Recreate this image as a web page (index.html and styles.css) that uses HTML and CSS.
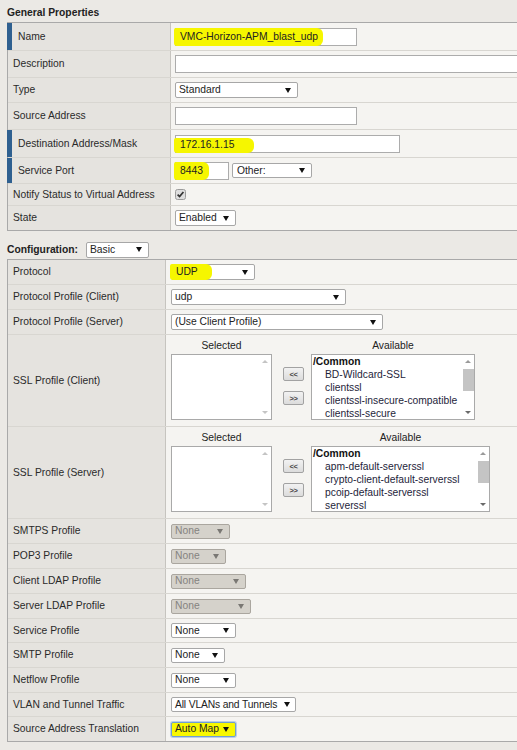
FILE: index.html
```html
<!DOCTYPE html>
<html>
<head>
<meta charset="utf-8">
<title>Virtual Server Properties</title>
<link rel="stylesheet" href="styles.css">
</head>
<body>
<div class="page">
  <div class="heading">General Properties</div>
  <div class="table general">
    <div class="row r28 req">
      <div class="lbl">Name</div>
      <div class="val"><span class="input w-name"><span class="hl hl-name">VMC-Horizon-APM_blast_udp</span></span></div>
    </div>
    <div class="row r27">
      <div class="lbl">Description</div>
      <div class="val"><span class="input w-desc"></span></div>
    </div>
    <div class="row r25">
      <div class="lbl">Type</div>
      <div class="val"><span class="select w-type"><span>Standard</span><i class="arr"></i></span></div>
    </div>
    <div class="row r27">
      <div class="lbl">Source Address</div>
      <div class="val"><span class="input w-src"></span></div>
    </div>
    <div class="row r28 req">
      <div class="lbl">Destination Address/Mask</div>
      <div class="val"><span class="input w-dst"><span class="hl hl-dst">172.16.1.15</span></span></div>
    </div>
    <div class="row r26 req">
      <div class="lbl">Service Port</div>
      <div class="val gap3"><span class="input w-port"><span class="hl hl-port">8443</span></span><span class="select w-other"><span>Other:</span><i class="arr"></i></span></div>
    </div>
    <div class="row r22">
      <div class="lbl">Notify Status to Virtual Address</div>
      <div class="val"><svg class="check" width="11" height="11" viewBox="0 0 11 11"><rect x="0.5" y="0.5" width="10" height="10" rx="2" fill="#dedede" stroke="#9c9c9c"/><path d="M2.6 5.6 L4.6 7.6 L8.4 3" fill="none" stroke="#333" stroke-width="1.7"/></svg></div>
    </div>
    <div class="row r24">
      <div class="lbl">State</div>
      <div class="val"><span class="select w-state"><span>Enabled</span><i class="arr"></i></span></div>
    </div>
  </div>

  <div class="config-head">
    <span class="heading-text">Configuration:</span>
    <span class="select w-basic"><span>Basic</span><i class="arr"></i></span>
  </div>

  <div class="table config">
    <div class="row r25">
      <div class="lbl">Protocol</div>
      <div class="val"><span class="select w-proto"><span class="hl hl-proto">UDP</span><i class="arr"></i></span></div>
    </div>
    <div class="row r25">
      <div class="lbl">Protocol Profile (Client)</div>
      <div class="val"><span class="select w-udp"><span>udp</span><i class="arr"></i></span></div>
    </div>
    <div class="row r25">
      <div class="lbl">Protocol Profile (Server)</div>
      <div class="val"><span class="select w-ucp"><span>(Use Client Profile)</span><i class="arr"></i></span></div>
    </div>
    <div class="row r92">
      <div class="lbl">SSL Profile (Client)</div>
      <div class="val dual">
        <div class="col">
          <div class="cap">Selected</div>
          <div class="listbox lb-sel">
            <div class="items"></div>
            <div class="sbar light"><span class="sarr up"></span><span class="sfill"></span><span class="sarr down"></span></div>
          </div>
        </div>
        <div class="btns"><span class="btn">&lt;&lt;</span><span class="btn">&gt;&gt;</span></div>
        <div class="col">
          <div class="cap">Available</div>
          <div class="listbox lb-av-c">
            <div class="items">
              <div class="grp">/Common</div>
              <div class="it">BD-Wildcard-SSL</div>
              <div class="it">clientssl</div>
              <div class="it">clientssl-insecure-compatible</div>
              <div class="it">clientssl-secure</div>
            </div>
            <div class="sbar"><span class="sarr up"></span><span class="thumb"></span><span class="sfill"></span><span class="sarr down"></span></div>
          </div>
        </div>
      </div>
    </div>
    <div class="row r92">
      <div class="lbl">SSL Profile (Server)</div>
      <div class="val dual">
        <div class="col">
          <div class="cap">Selected</div>
          <div class="listbox lb-sel">
            <div class="items"></div>
            <div class="sbar light"><span class="sarr up"></span><span class="sfill"></span><span class="sarr down"></span></div>
          </div>
        </div>
        <div class="btns"><span class="btn">&lt;&lt;</span><span class="btn">&gt;&gt;</span></div>
        <div class="col">
          <div class="cap">Available</div>
          <div class="listbox lb-av-s">
            <div class="items">
              <div class="grp">/Common</div>
              <div class="it">apm-default-serverssl</div>
              <div class="it">crypto-client-default-serverssl</div>
              <div class="it">pcoip-default-serverssl</div>
              <div class="it">serverssl</div>
            </div>
            <div class="sbar"><span class="sarr up"></span><span class="thumb"></span><span class="sfill"></span><span class="sarr down"></span></div>
          </div>
        </div>
      </div>
    </div>
    <div class="row r25">
      <div class="lbl">SMTPS Profile</div>
      <div class="val"><span class="select dis w-smtps"><span>None</span><i class="arr"></i></span></div>
    </div>
    <div class="row r25">
      <div class="lbl">POP3 Profile</div>
      <div class="val"><span class="select dis w-pop3"><span>None</span><i class="arr"></i></span></div>
    </div>
    <div class="row r25">
      <div class="lbl">Client LDAP Profile</div>
      <div class="val"><span class="select dis w-cldap"><span>None</span><i class="arr"></i></span></div>
    </div>
    <div class="row r25">
      <div class="lbl">Server LDAP Profile</div>
      <div class="val"><span class="select dis w-sldap"><span>None</span><i class="arr"></i></span></div>
    </div>
    <div class="row r24">
      <div class="lbl">Service Profile</div>
      <div class="val"><span class="select w-svc"><span>None</span><i class="arr"></i></span></div>
    </div>
    <div class="row r25">
      <div class="lbl">SMTP Profile</div>
      <div class="val"><span class="select w-smtp"><span>None</span><i class="arr"></i></span></div>
    </div>
    <div class="row r25">
      <div class="lbl">Netflow Profile</div>
      <div class="val"><span class="select w-net"><span>None</span><i class="arr"></i></span></div>
    </div>
    <div class="row r24">
      <div class="lbl">VLAN and Tunnel Traffic</div>
      <div class="val"><span class="select w-vlan"><span class="tight">All VLANs and Tunnels</span><i class="arr"></i></span></div>
    </div>
    <div class="row r24">
      <div class="lbl">Source Address Translation</div>
      <div class="val"><span class="select w-snat hl-sel"><span>Auto Map</span><i class="arr"></i></span></div>
    </div>
  </div>
</div>
</body>
</html>
```

FILE: styles.css
```css
html, body {
  margin: 0;
  padding: 0;
  overflow: hidden;
}
body {
  width: 517px;
  height: 750px;
  background: #ebe9e5;
  font-family: "Liberation Sans", Arial, sans-serif;
  font-size: 10.3px;
  color: #222;
}
.page {
  padding-left: 7px;
  width: 510px;
  overflow: hidden;
}
.heading {
  box-sizing: border-box;
  height: 22px;
  padding-top: 6px;
  line-height: 14px;
  font-weight: bold;
  color: #222;
}
.heading-text {
  font-weight: bold;
  line-height: 14px;
}
.config-head {
  box-sizing: border-box;
  height: 28px;
  padding-top: 9px;
  display: flex;
  align-items: center;
  gap: 8px;
}
.table {
  width: 540px;
  border: 1px solid #a9a9a9;
  background: #f5f4f1;
}
.row {
  display: grid;
  box-sizing: border-box;
  border-bottom: 1px solid #d8d6d1;
}
.row:last-child { border-bottom: 0; }
.general .row { grid-template-columns: 163px 1fr; }
.config .row { grid-template-columns: 158px 1fr; }
.r22 { height: 22px; }
.r24 { height: 24px; }
.r25 { height: 25px; }
.r26 { height: 26px; }
.r27 { height: 27px; }
.r28 { height: 28px; }
.r92 { height: 92px; }

.lbl {
  box-sizing: border-box;
  display: flex;
  align-items: center;
  padding-left: 5px;
  background: #e5e3df;
  border-right: 1px solid #c6c4bf;
  color: #2a2a2a;
  white-space: nowrap;
  line-height: 14px;
}
.req .lbl {
  margin-left: -1px;
  border-left: 5px solid #2f6090;
  padding-left: 6px;
}
.val {
  display: flex;
  align-items: center;
  padding-left: 4px;
  overflow: hidden;
}
.config .val { padding-left: 5px; }
.gap3 { gap: 3px; }

.input {
  box-sizing: border-box;
  display: inline-flex;
  align-items: center;
  flex-shrink: 0;
  height: 18px;
  padding: 0 4px;
  border: 1px solid #acacac;
  background: #fff;
  white-space: nowrap;
  line-height: 14px;
}
.select {
  box-sizing: border-box;
  display: inline-flex;
  align-items: center;
  justify-content: space-between;
  flex-shrink: 0;
  height: 16px;
  padding: 0 6px 0 3px;
  border: 1px solid #a7a7a7;
  border-radius: 2px;
  background: #fff;
  white-space: nowrap;
  line-height: 14px;
}
.arr {
  display: block;
  flex-shrink: 0;
  width: 0;
  height: 0;
  border-left: 3px solid transparent;
  border-right: 3px solid transparent;
  border-top: 5px solid #111;
}
.tight { letter-spacing: -0.15px; }
.select.dis {
  background: #d5d2cb;
  border-color: #aaa69f;
  color: #858380;
}
.select.dis .arr { border-top-color: #7a7874; }

.w-name { width: 182px; }
.w-desc { width: 420px; }
.w-type { width: 123px; }
.w-src { width: 182px; }
.w-dst { width: 225px; }
.w-port { width: 54px; }
.w-other { width: 80px; height: 15px; padding-left: 4px; }
.w-state { width: 61px; }
.w-basic { width: 63px; }
.w-proto { width: 84px; }
.w-udp { width: 175px; }
.w-ucp { width: 212px; }
.w-smtps { width: 59px; height: 15px; }
.w-pop3 { width: 55px; height: 15px; }
.w-cldap { width: 75px; height: 15px; }
.w-sldap { width: 80px; height: 15px; }
.w-svc { width: 65px; height: 15px; }
.w-smtp { width: 54px; height: 15px; }
.w-net { width: 65px; height: 15px; }
.w-vlan { width: 125px; height: 15px; padding-right: 5px; }
.w-snat { width: 65px; height: 15px; }

.hl {
  display: inline-flex;
  align-items: center;
  align-self: stretch;
  background: #f6f600;
  border-radius: 2px 6px 6px 3px;
}
.hl-name {
  margin: -1px 0 -1px -6px;
  padding: 0 5px 0 6px;
}
.hl-dst {
  margin: 2px 0 -1px -6px;
  padding: 0 20px 0 6px;
}
.hl-port {
  margin: -1px 0 -1px -6px;
  padding: 0 6px 0 6px;
}
.hl-proto {
  margin: -1px 0 -1px -5px;
  padding: 0 14px 0 6px;
}
.hl-sel {
  background: #f8f800;
  border-color: #6f9fd0;
  box-shadow: 0 0 0 1px rgba(120, 160, 220, 0.45);
}

.check { display: block; }

.dual {
  align-items: flex-start;
  padding-top: 4px;
}
.col {
  display: flex;
  flex-direction: column;
  align-items: center;
  flex-shrink: 0;
}
.cap {
  line-height: 14px;
  color: #222;
}
.listbox {
  box-sizing: border-box;
  display: flex;
  height: 66px;
  margin-top: 1px;
  border: 1px solid #a9a9a9;
  background: #fff;
}
.lb-sel { width: 101px; }
.lb-av-c { width: 164px; }
.lb-av-s { width: 179px; }
.items {
  flex: 1;
  padding-left: 1px;
  line-height: 13px;
  white-space: nowrap;
  overflow: hidden;
}
.grp { font-weight: bold; color: #111; }
.it { padding-left: 12px; color: #1e1e3a; }
.sbar {
  width: 12px;
  display: flex;
  flex-direction: column;
  align-items: center;
  background: #fff;
}
.sarr {
  display: block;
  width: 0;
  height: 0;
  border-left: 3px solid transparent;
  border-right: 3px solid transparent;
}
.sarr.up {
  margin-top: 5px;
  border-bottom: 3px solid #9a9a9a;
}
.sarr.down {
  margin-bottom: 5px;
  border-top: 3px solid #6a6a6a;
}
.light .sarr.up { border-bottom-color: #c4c4c4; }
.light .sarr.down { border-top-color: #c4c4c4; }
.thumb {
  display: block;
  width: 11px;
  height: 22px;
  margin-top: 6px;
  background: #c4c4c4;
}
.sfill { flex: 1; }
.btns {
  display: flex;
  flex-direction: column;
  flex-shrink: 0;
  gap: 10px;
  margin: 28px 7px 0 11px;
}
.btn {
  box-sizing: border-box;
  display: flex;
  align-items: center;
  justify-content: center;
  width: 21px;
  height: 14px;
  border: 1px solid #a2a2a2;
  border-radius: 2px;
  background: linear-gradient(#f2f2f2, #dcdcdc);
  font-size: 7.5px;
  font-weight: bold;
  color: #444;
  letter-spacing: -0.5px;
}
```
